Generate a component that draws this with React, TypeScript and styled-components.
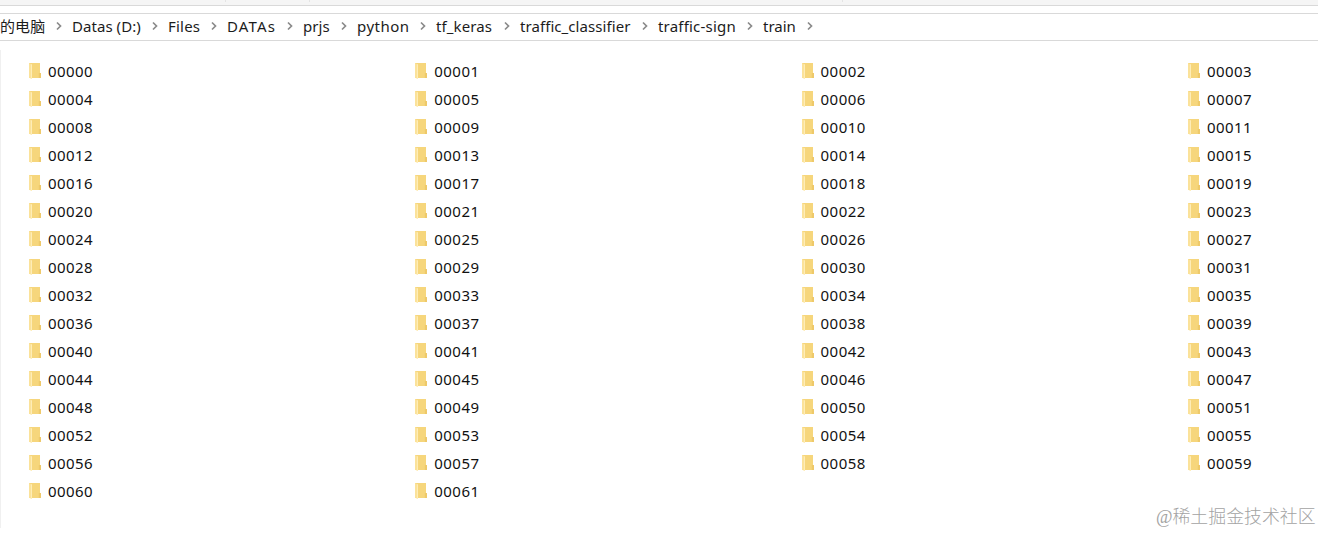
import styled, { createGlobalStyle } from 'styled-components';

const GlobalStyle = createGlobalStyle`
  body {
    margin: 0;
    background: #fff;
    overflow: hidden;
  }
`;

const Window = styled.div`
  position: relative;
  box-sizing: border-box;
  width: 1322px;
  height: 533px;
  padding-right: 4px;
  overflow: hidden;
  background: #fff;
  color: #1c1c1c;
  font-family: 'Noto Sans', 'Noto Sans CJK SC', sans-serif;
`;

const Ribbon = styled.div`
  display: flex;
  box-sizing: border-box;
  height: 6px;
  background: #f5f5f5;
  border-bottom: 1px solid #d9d9d9;
`;

const RibbonGroup = styled.div<{ $width: number }>`
  box-sizing: border-box;
  width: ${({ $width }) => $width}px;
  height: 2px;
  border-right: 1px solid #e4e4e4;
`;

const AddressBar = styled.nav`
  display: flex;
  align-items: center;
  box-sizing: border-box;
  height: 28px;
  margin-top: 7px;
  padding-bottom: 2px;
  border-top: 1px solid #d9d9d9;
  border-bottom: 1px solid #d9d9d9;
`;

const Crumb = styled.div<{ $width: number }>`
  display: flex;
  flex: none;
  align-items: center;
  justify-content: space-between;
  box-sizing: border-box;
  width: ${({ $width }) => $width}px;
  padding-right: 10px;
`;

const CrumbLabel = styled.span<{ $spacing: number }>`
  font-size: 15px;
  line-height: 24px;
  letter-spacing: ${({ $spacing }) => $spacing}px;
  white-space: nowrap;
`;

const Chevron = styled.svg`
  flex: none;
  width: 6px;
  height: 10px;
  fill: none;
  stroke: #8a8a8a;
  stroke-width: 1.7;
`;

const FileGrid = styled.main`
  display: grid;
  grid-template-columns: repeat(4, 386.3px);
  grid-auto-rows: 28px;
  align-content: start;
  box-sizing: border-box;
  height: 478px;
  margin-top: 9px;
  padding: 7px 0 0 27px;
  border-left: 1px solid #f0f0f0;
`;

const Folder = styled.div`
  display: flex;
  align-items: center;
  gap: 6px;
`;

const FolderName = styled.span`
  color: #111;
  font-size: 15px;
  line-height: 28px;
  letter-spacing: 0.45px;
`;

const FolderSvg = styled.svg`
  flex: none;
  width: 14px;
  height: 18px;
`;

const Watermark = styled.div`
  position: absolute;
  top: 504px;
  left: 1156px;
  color: #a3a3a3;
  font-family: 'Liberation Serif', 'Noto Sans CJK SC', serif;
  font-size: 17.9px;
  font-weight: 300;
  line-height: 26px;
  white-space: nowrap;
`;

const crumbs = [
  { label: '的电脑', width: 72, spacing: 0.1 },
  { label: 'Datas (D:)', width: 96, spacing: 0.05 },
  { label: 'Files', width: 59, spacing: 0.2 },
  { label: 'DATAs', width: 76, spacing: 1.2 },
  { label: 'prjs', width: 54, spacing: 0.1 },
  { label: 'python', width: 79, spacing: 0.5 },
  { label: 'tf_keras', width: 84, spacing: 0.1 },
  { label: 'traffic_classifier', width: 138, spacing: 0.07 },
  { label: 'traffic-sign', width: 105, spacing: 0.2 },
  { label: 'train', width: 60, spacing: 0 },
];

const folders = Array.from({ length: 62 }, (_, index) => String(index).padStart(5, '0'));

const FolderIcon = () => (
  <FolderSvg viewBox="0 0 14 18">
    <path d="M1 1h11v10l1 1v4H1z" fill="#f6d67c" />
    <path d="M1 1l3 1.5V17L1 15.8z" fill="#fbe29a" />
    <path d="M4 2.5V17l-.8-.3V2.2z" fill="#fff0bf" />
    <path d="M10.8 11H13v5h-2.2z" fill="#eec96a" />
  </FolderSvg>
);

const App = () => (
  <>
    <GlobalStyle />
    <Window>
      <Ribbon>
        <RibbonGroup $width={226} />
        <RibbonGroup $width={84} />
        <RibbonGroup $width={533} />
      </Ribbon>
      <AddressBar>
        {crumbs.map(({ label, width, spacing }) => (
          <Crumb key={label} $width={width}>
            <CrumbLabel $spacing={spacing}>{label}</CrumbLabel>
            <Chevron viewBox="0 0 6 10">
              <path d="M1 1.5L4.5 5L1 8.5" />
            </Chevron>
          </Crumb>
        ))}
      </AddressBar>
      <FileGrid>
        {folders.map((name) => (
          <Folder key={name}>
            <FolderIcon />
            <FolderName>{name}</FolderName>
          </Folder>
        ))}
      </FileGrid>
      <Watermark>@稀土掘金技术社区</Watermark>
    </Window>
  </>
);

export default App;
